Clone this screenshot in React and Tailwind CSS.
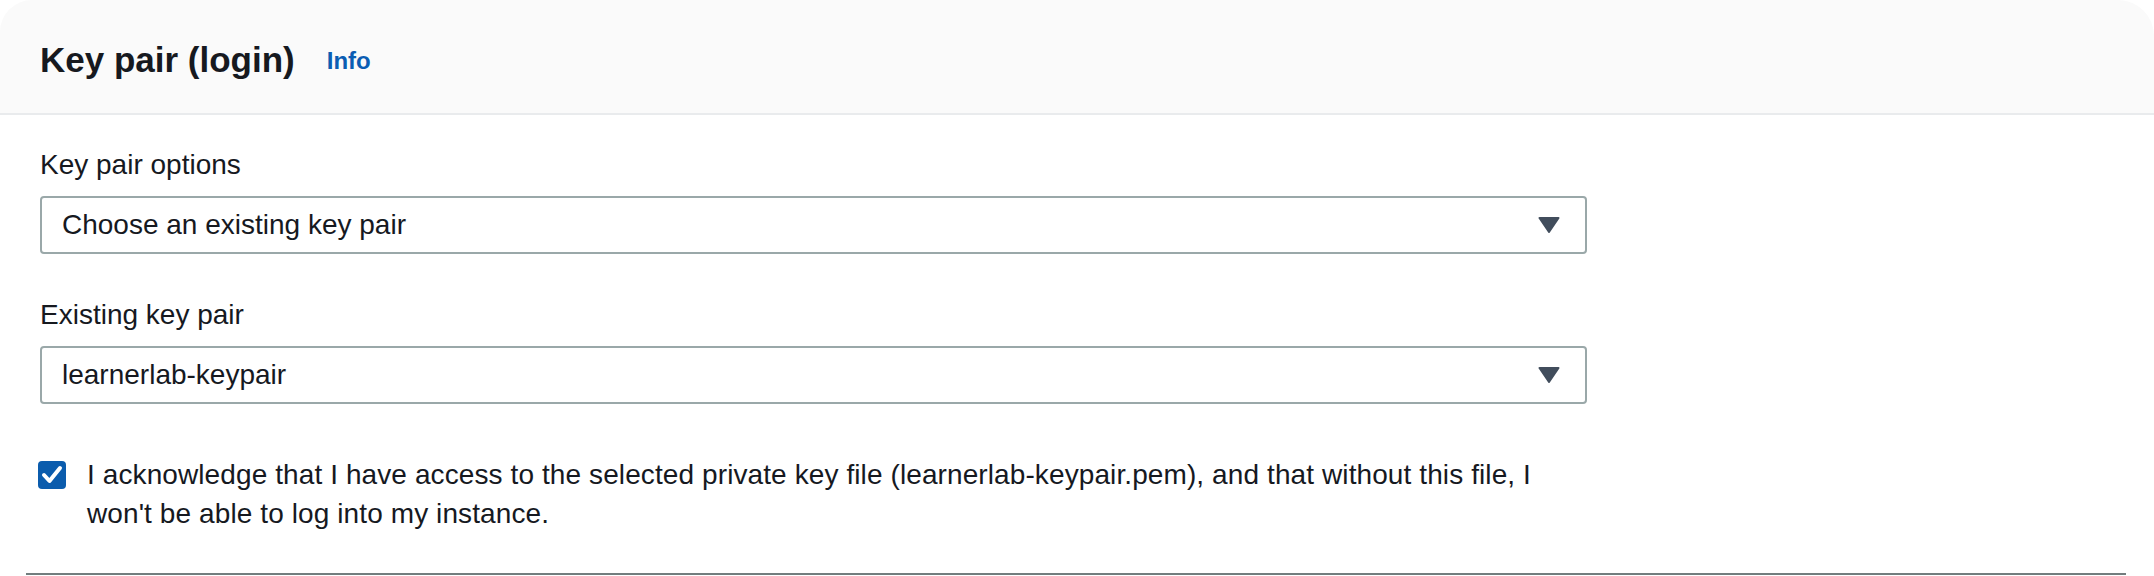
import React, { useState } from 'react';

function Caret() {
  return (
    <svg width="22" height="16" viewBox="0 0 22 16" className="shrink-0">
      <path d="M1.5 1 H20.5 L11 15 Z" fill="#414d5c" stroke="#414d5c" strokeWidth="2" strokeLinejoin="round" />
    </svg>
  );
}

function SelectField({ label, value }) {
  return (
    <div className="flex flex-col">
      <label className="text-[28px] leading-[40px] text-[#16191f]">{label}</label>
      <div className="mt-[11px] h-[58px] flex items-center justify-between rounded-[4px] border-2 border-[#9aa8a9] bg-white pl-[20px] pr-[25px]">
        <span className="text-[28px] leading-[40px] text-[#16191f]">{value}</span>
        <Caret />
      </div>
    </div>
  );
}

export default function App() {
  const [checked, setChecked] = useState(true);

  return (
    <div className="w-[2154px] h-[576px] bg-white overflow-hidden font-['Liberation_Sans',Arial,sans-serif] flex flex-col">
      {/* Card header */}
      <header className="h-[115px] shrink-0 pt-[6px] flex items-center gap-[32px] px-[40px] bg-[#fafafa] border-b-2 border-[#e9ebed] rounded-tl-[32px] rounded-tr-[36px]">
        <h2 className="text-[35px] leading-[44px] font-bold text-[#16191f]">Key pair (login)</h2>
        <a className="text-[24px] leading-[32px] font-bold text-[#0b5db3] mt-[2px]">Info</a>
      </header>

      {/* Card body */}
      <div className="pt-[30px] px-[40px] w-[1627px] flex flex-col">
        <SelectField label="Key pair options" value="Choose an existing key pair" />
        <div className="mt-[41px]">
          <SelectField label="Existing key pair" value="learnerlab-keypair" />
        </div>

        <div className="mt-[51px] flex items-start gap-[21px] -ml-[2px]">
          <button
            onClick={() => setChecked(!checked)}
            className="mt-[6px] w-[28px] h-[28px] shrink-0 rounded-[4px] bg-[#0b5cad] flex items-center justify-center"
          >
            {checked && (
              <svg width="28" height="28" viewBox="0 0 28 28">
                <polyline points="6,14 11.5,20 22,7" fill="none" stroke="#ffffff" strokeWidth="4" strokeLinecap="round" strokeLinejoin="round" />
              </svg>
            )}
          </button>
          <p className="text-[28px] leading-[39px] text-[#16191f] tracking-[0.1px]">
            I acknowledge that I have access to the selected private key file (learnerlab-keypair.pem), and that without this file, I won't be able to log into my instance.
          </p>
        </div>
      </div>

      {/* Next section edge */}
      <div className="mt-auto mb-[1px] ml-[26px] mr-[28px] h-[2px] shrink-0 bg-[#727d7e]" />
    </div>
  );
}
